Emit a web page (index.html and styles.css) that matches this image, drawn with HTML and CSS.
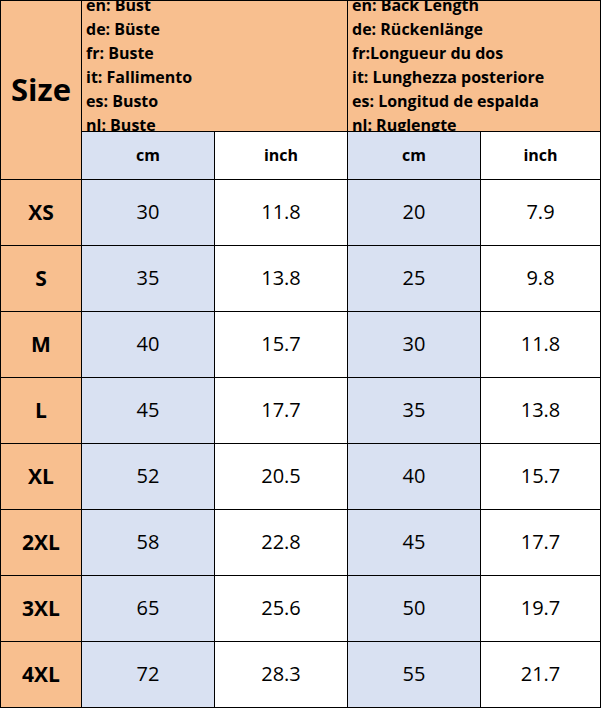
FILE: index.html
```html
<!DOCTYPE html>
<html>
<head>
<meta charset="utf-8">
<link rel="stylesheet" href="styles.css">
</head>
<body>
<div class="chart">
  <div class="cell size-head">Size</div>
  <div class="cell measure span2">
    <div class="langs">
      <div>en: Bust</div>
      <div>de: Büste</div>
      <div>fr: Buste</div>
      <div>it: Fallimento</div>
      <div>es: Busto</div>
      <div>nl: Buste</div>
    </div>
  </div>
  <div class="cell measure span2">
    <div class="langs">
      <div>en: Back Length</div>
      <div>de: Rückenlänge</div>
      <div>fr:Longueur du dos</div>
      <div>it: Lunghezza posteriore</div>
      <div>es: Longitud de espalda</div>
      <div>nl: Ruglengte</div>
    </div>
  </div>
  <div class="cell unit blue">cm</div>
  <div class="cell unit">inch</div>
  <div class="cell unit blue">cm</div>
  <div class="cell unit">inch</div>

  <div class="cell size">XS</div><div class="cell val blue">30</div><div class="cell val">11.8</div><div class="cell val blue">20</div><div class="cell val">7.9</div>
  <div class="cell size">S</div><div class="cell val blue">35</div><div class="cell val">13.8</div><div class="cell val blue">25</div><div class="cell val">9.8</div>
  <div class="cell size">M</div><div class="cell val blue">40</div><div class="cell val">15.7</div><div class="cell val blue">30</div><div class="cell val">11.8</div>
  <div class="cell size">L</div><div class="cell val blue">45</div><div class="cell val">17.7</div><div class="cell val blue">35</div><div class="cell val">13.8</div>
  <div class="cell size">XL</div><div class="cell val blue">52</div><div class="cell val">20.5</div><div class="cell val blue">40</div><div class="cell val">15.7</div>
  <div class="cell size">2XL</div><div class="cell val blue">58</div><div class="cell val">22.8</div><div class="cell val blue">45</div><div class="cell val">17.7</div>
  <div class="cell size">3XL</div><div class="cell val blue">65</div><div class="cell val">25.6</div><div class="cell val blue">50</div><div class="cell val">19.7</div>
  <div class="cell size">4XL</div><div class="cell val blue">72</div><div class="cell val">28.3</div><div class="cell val blue">55</div><div class="cell val">21.7</div>
</div>
</body>
</html>
```
FILE: styles.css
```css
html, body {
  margin: 0;
  padding: 0;
  background: #ffffff;
}
.chart {
  width: 601px;
  height: 708px;
  box-sizing: border-box;
  display: grid;
  grid-template-columns: 80px 132px 132px 132px 119px;
  grid-template-rows: 130px 47px repeat(8, 65px);
  gap: 1px;
  padding: 1px;
  background: #000000;
  font-family: "Open Sans", "Noto Sans", sans-serif;
  color: #000000;
}
.cell {
  background: #ffffff;
  display: flex;
  align-items: center;
  justify-content: center;
  overflow: hidden;
}
.blue {
  background: #d9e1f2;
}
.size-head {
  grid-row: span 2;
  background: #f8bf8f;
  font-weight: 700;
  font-size: 31px;
  padding-bottom: 2px;
}
.measure {
  grid-column: span 2;
  background: #f8bf8f;
  justify-content: flex-start;
  padding-left: 4px;
  padding-bottom: 2px;
}
.langs {
  font-weight: 700;
  font-size: 16px;
  line-height: 24px;
  white-space: nowrap;
}
.unit {
  font-weight: 700;
  font-size: 16px;
  padding-bottom: 2px;
}
.size {
  background: #f8bf8f;
  font-weight: 700;
  font-size: 21px;
  padding-bottom: 2px;
}
.val {
  font-size: 20px;
  padding-bottom: 2px;
}
```
